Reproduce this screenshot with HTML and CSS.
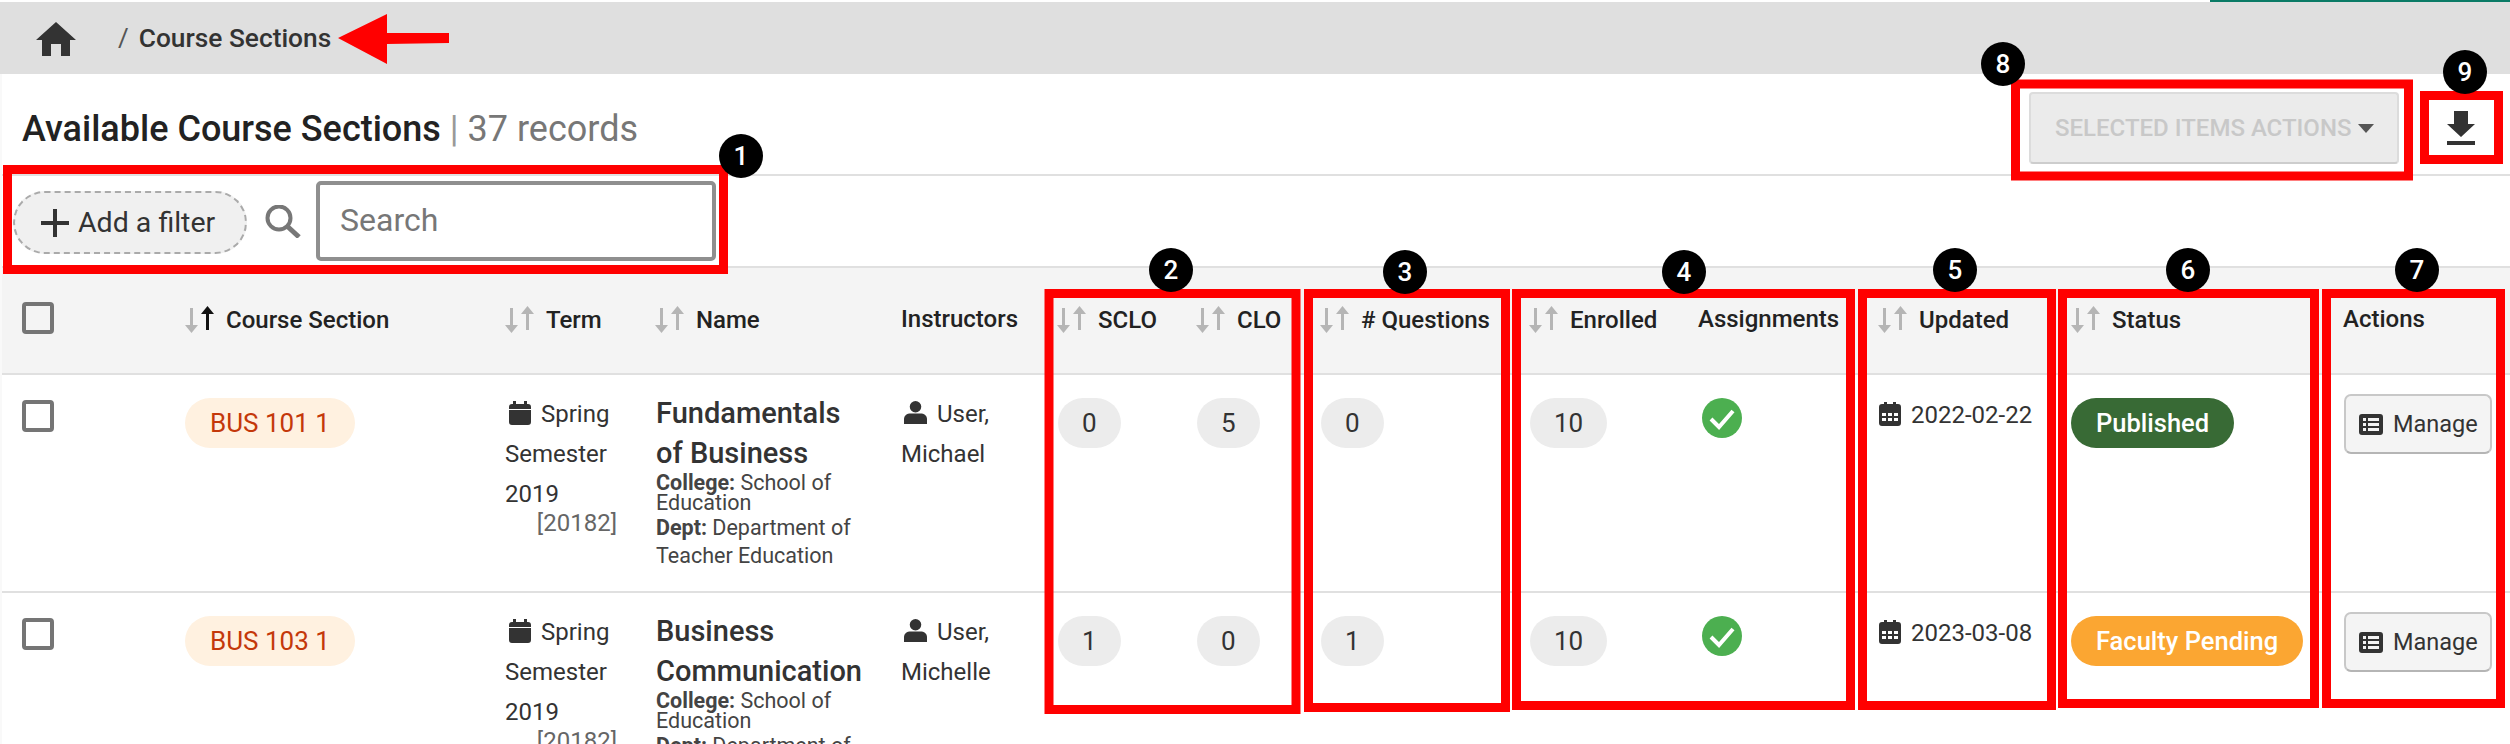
FILE: index.html
```html
<!DOCTYPE html>
<html lang="en">
<head>
<meta charset="utf-8">
<title>Course Sections</title>
<link rel="stylesheet" href="styles.css">
</head>
<body>
<svg class="defs" width="0" height="0" aria-hidden="true">
  <symbol id="sort" viewBox="0 0 32 28">
    <path class="sort-down" d="M6 2h3v17h5L7.500 27 1 19h5z"/>
    <path class="sort-up" d="M22 24V8h-5L23.500 0 30 8h-5v16z"/>
  </symbol>
  <symbol id="date" viewBox="0 0 22 24">
    <path fill-rule="evenodd" d="M3 2h2V0h3v2h6V0h3v2h2a3 3 0 0 1 3 3v16a3 3 0 0 1-3 3H3a3 3 0 0 1-3-3V5a3 3 0 0 1 3-3zM3 11v3h4v-3zm6 0v3h4v-3zm6 0v3h4v-3zM3 16v3h4v-3zm6 0v3h4v-3zm6 0v3h4v-3z"/>
  </symbol>
  <symbol id="term" viewBox="0 0 22 24">
    <path d="M4 0h3v3h8V0h3v3h1a3 3 0 0 1 3 3v2H0V6a3 3 0 0 1 3-3h1zM0 9h22v12a3 3 0 0 1-3 3H3a3 3 0 0 1-3-3z"/>
  </symbol>
  <symbol id="person" viewBox="0 0 24 24">
    <circle cx="12" cy="6" r="6"/><path d="M0 24v-5c0-4 3-6 7-6h10c4 0 7 2 7 6v5z"/>
  </symbol>
  <symbol id="ok" viewBox="0 0 40 40">
    <circle cx="20" cy="20" r="20" fill="#4caf50"/><path d="M9 21l8 8 14-16" fill="none" stroke="#fff" stroke-width="4"/>
  </symbol>
  <symbol id="list" viewBox="0 0 24 21">
    <path fill-rule="evenodd" d="M3 0h18a3 3 0 0 1 3 3v15a3 3 0 0 1-3 3H3a3 3 0 0 1-3-3V3a3 3 0 0 1 3-3zM4 4v3h3V4zm5 0v3h11V4zM4 9v3h3V9zm5 0v3h11V9zM4 14v3h3v-3zm5 0v3h11v-3z"/>
  </symbol>
</svg>

<div class="strip"><span class="strip-accent"></span></div>
<nav class="crumbs">
  <svg class="home" viewBox="0 0 40 34"><path d="M20 0l20 18h-6v16H25V22H15v12H6V18H0z"/></svg>
  <span class="sep">/</span>
  <span class="crumb">Course Sections</span>
</nav>

<main class="content">
  <header class="title-row">
    <h1 class="title">Available Course Sections <span class="count"><span class="bar">|</span> 37 records</span></h1>
    <div class="title-actions">
      <button class="bulk" disabled>SELECTED ITEMS ACTIONS<i class="caret"></i></button>
      <svg class="download" viewBox="0 0 28 34"><path d="M7 0h14v13h7L14 26 0 13h7zM0 30h28v4H0z"/></svg>
    </div>
  </header>

  <div class="filter-row">
    <button class="add-filter"><svg class="plus" viewBox="0 0 28 28"><path d="M12 0h4v12h12v4H16v12h-4V16H0v-4h12z"/></svg>Add a filter</button>
    <svg class="search-icon" viewBox="0 0 36 33"><circle cx="14" cy="13" r="11.500" fill="none" stroke="#777" stroke-width="4"/><path d="M22 21l12 11" stroke="#777" stroke-width="5"/></svg>
    <div class="search">Search</div>
  </div>

  <table class="grid">
    <colgroup>
      <col class="c-check"><col class="c-section"><col class="c-term"><col class="c-name"><col class="c-inst"><col class="c-sclo"><col class="c-clo"><col class="c-q"><col class="c-enr"><col class="c-asg"><col class="c-upd"><col class="c-status"><col class="c-act">
    </colgroup>
    <thead>
      <tr>
        <th><span class="box"></span></th>
        <th class="active"><svg class="sort"><use href="#sort"/></svg>Course Section</th>
        <th><svg class="sort"><use href="#sort"/></svg>Term</th>
        <th><svg class="sort"><use href="#sort"/></svg>Name</th>
        <th>Instructors</th>
        <th><svg class="sort"><use href="#sort"/></svg>SCLO</th>
        <th><svg class="sort"><use href="#sort"/></svg>CLO</th>
        <th><svg class="sort"><use href="#sort"/></svg># Questions</th>
        <th><svg class="sort"><use href="#sort"/></svg>Enrolled</th>
        <th>Assignments</th>
        <th><svg class="sort"><use href="#sort"/></svg>Updated</th>
        <th><svg class="sort"><use href="#sort"/></svg>Status</th>
        <th>Actions</th>
      </tr>
    </thead>
    <tbody>
      <tr>
        <td><span class="box"></span></td>
        <td><span class="pill section">BUS 101 1</span></td>
        <td><svg class="ico term-ico"><use href="#term"/></svg>Spring Semester 2019<div class="code">[20182]</div></td>
        <td>
          <div class="course">Fundamentals of Business</div>
          <div class="college"><b>College:</b> School of Education</div>
          <div class="dept"><b>Dept:</b> Department of Teacher Education</div>
        </td>
        <td><svg class="ico person-ico"><use href="#person"/></svg>User, Michael</td>
        <td><span class="num">0</span></td>
        <td><span class="num">5</span></td>
        <td><span class="num">0</span></td>
        <td><span class="num">10</span></td>
        <td><svg class="ok"><use href="#ok"/></svg></td>
        <td class="nowrap"><svg class="ico date-ico"><use href="#date"/></svg>2022-02-22</td>
        <td><span class="pill published">Published</span></td>
        <td><button class="manage"><svg class="list"><use href="#list"/></svg>Manage</button></td>
      </tr>
      <tr>
        <td><span class="box"></span></td>
        <td><span class="pill section">BUS 103 1</span></td>
        <td><svg class="ico term-ico"><use href="#term"/></svg>Spring Semester 2019<div class="code">[20182]</div></td>
        <td>
          <div class="course">Business Communication</div>
          <div class="college"><b>College:</b> School of Education</div>
          <div class="dept"><b>Dept:</b> Department of Teacher Education</div>
        </td>
        <td><svg class="ico person-ico"><use href="#person"/></svg>User, Michelle</td>
        <td><span class="num">1</span></td>
        <td><span class="num">0</span></td>
        <td><span class="num">1</span></td>
        <td><span class="num">10</span></td>
        <td><svg class="ok"><use href="#ok"/></svg></td>
        <td class="nowrap"><svg class="ico date-ico"><use href="#date"/></svg>2023-03-08</td>
        <td><span class="pill pending">Faculty Pending</span></td>
        <td><button class="manage"><svg class="list"><use href="#list"/></svg>Manage</button></td>
      </tr>
    </tbody>
  </table>
</main>

<svg class="notes" viewBox="0 0 2510 744">
  <path class="arrow" d="M338 38L387 14V33L449 33V43L387 44V64z"/>
  <g class="frames">
    <rect x="7.500" y="169.500" width="716" height="100"/>
    <rect x="1049" y="293.500" width="247" height="416"/>
    <rect x="1308.500" y="293.500" width="197" height="414"/>
    <rect x="1516.500" y="293.500" width="334" height="412"/>
    <rect x="1862.500" y="293.500" width="189" height="412"/>
    <rect x="2062.500" y="293.500" width="252" height="410"/>
    <rect x="2326.500" y="293.500" width="174" height="410"/>
    <rect x="2015.500" y="84" width="393" height="92"/>
    <rect x="2424.500" y="95.500" width="74" height="64"/>
  </g>
  <g class="marks">
    <circle cx="741" cy="156" r="22"/><text x="741" y="165">1</text>
    <circle cx="1171" cy="270" r="22"/><text x="1171" y="279">2</text>
    <circle cx="1405" cy="272" r="22"/><text x="1405" y="281">3</text>
    <circle cx="1684" cy="272" r="22"/><text x="1684" y="281">4</text>
    <circle cx="1955" cy="270" r="22"/><text x="1955" y="279">5</text>
    <circle cx="2188" cy="270" r="22"/><text x="2188" y="279">6</text>
    <circle cx="2417" cy="270" r="22"/><text x="2417" y="279">7</text>
    <circle cx="2003" cy="64" r="22"/><text x="2003" y="73">8</text>
    <circle cx="2465" cy="72" r="22"/><text x="2465" y="81">9</text>
  </g>
</svg>
</body>
</html>
```
FILE: styles.css
```css
* { box-sizing: border-box; }
html, body { margin: 0; height: 744px; overflow: hidden; background: #fff; }
body { position: relative; font-family: Roboto, "Liberation Sans", sans-serif; font-size: 24px; color: #333; }
.defs { position: absolute; }

.strip { height: 2px; display: flex; justify-content: flex-end; }
.strip-accent { width: 300px; background: #0a7b66; }

.crumbs { height: 72px; background: #dfdfdf; display: flex; align-items: center; padding-left: 36px; }
.home { width: 40px; height: 34px; fill: #333; margin-top: 2px; }
.sep { margin-left: 42px; font-size: 26px; color: #555; }
.crumb { margin-left: 10px; font-weight: 500; font-size: 26.300px; }

.content { border-left: 2px solid #f9f9f9; }

.title-row { height: 102px; display: flex; justify-content: space-between; align-items: center; padding: 8px 35px 0 20px; border-bottom: 2px solid #e0e0e0; }
.title { margin: 2px 0 0; font-size: 36px; font-weight: 500; color: #222; }
.count { font-weight: 400; color: #777; }
.bar { color: #999; }
.title-actions { display: flex; align-items: center; gap: 48px; }
.bulk { width: 370px; height: 72px; padding: 0 0 0 24px; text-align: left; font: 500 24px Roboto, sans-serif; color: #c8c8c8; background: #ebebeb; border: 2px solid #dcdcdc; border-bottom-color: #cdcdcd; border-radius: 4px; display: flex; align-items: center; }
.caret { display: inline-block; width: 0; height: 0; margin-left: 7px; border: solid transparent; border-width: 9px 8px 0; border-top-color: #555; }
.download { width: 28px; height: 34px; fill: #333; }

.filter-row { height: 92px; display: flex; align-items: center; padding-left: 11px; border-bottom: 2px solid #e0e0e0; }
.add-filter { width: 234px; height: 63px; padding: 0 0 0 26px; display: flex; align-items: center; gap: 9px; margin-top: 3px; font: 400 28.500px Roboto, sans-serif; color: #333; background: #f0f0f0; border: 2px dashed #aaa; border-radius: 32px; }
.plus { width: 28px; height: 28px; fill: #333; flex: none; }
.search-icon { width: 36px; height: 33px; margin-left: 18px; }
.search { width: 400px; height: 80px; margin-left: 15px; padding-left: 20px; line-height: 70px; font-size: 32px; color: #777; border: 4px solid #8f8f8f; border-radius: 5px; }

.grid { width: 2508px; table-layout: fixed; border-collapse: collapse; }
.c-check { width: 183px; } .c-section { width: 320px; } .c-term { width: 150px; } .c-name { width: 246px; }
.c-inst { width: 156px; } .c-sclo { width: 139px; } .c-clo { width: 124px; } .c-q { width: 209px; }
.c-enr { width: 169px; } .c-asg { width: 180px; } .c-upd { width: 193px; } .c-status { width: 273px; } .c-act { width: 166px; }

th { height: 106px; padding: 38px 0 0; background: #f4f4f4; text-align: left; vertical-align: top; font-size: 24px; font-weight: 500; line-height: 27px; color: #222; white-space: nowrap; border-bottom: 2px solid #e0e0e0; }
th:first-child, td:first-child { padding-left: 20px; }
th:first-child { padding-top: 34px; }
th:last-child { text-indent: -1px; }
td { height: 218px; padding: 19px 0 0; vertical-align: top; line-height: 40px; border-bottom: 2px solid #e0e0e0; }
td:nth-child(3) { padding-right: 38px; }
td:nth-child(4) { padding: 19px 40px 0 1px; }
td:nth-child(5) { padding-right: 20px; }

.sort { width: 32px; height: 28px; margin: 0 10px -6px -1px; }
.sort-down { fill: #b5b5b5; }
.sort-up { fill: var(--sort-up, #b5b5b5); }
.active { --sort-up: #111; }

.box { display: block; width: 32px; height: 32px; border: 4px solid #757575; border-radius: 4px; background: #fff; }
td .box { margin-top: 6px; }
th .box { background: none; }

.pill { display: inline-block; height: 50px; line-height: 50px; margin-top: 4px; padding: 0 25px; border-radius: 25px; font-size: 26px; }
.section { color: #c4380a; background: #fff1e0; }
.published { color: #fff; background: #386a35; font-weight: 500; font-size: 25.500px; }
.pending { color: #fff; background: #fba632; font-weight: 500; font-size: 25.500px; }
.num { display: inline-block; min-width: 62px; height: 50px; margin: 4px 0 0 1px; padding: 0 24px; line-height: 50px; text-align: center; border-radius: 25px; background: #ececec; font-size: 26px; }

.ico { fill: #333; }
.term-ico { width: 22px; height: 24px; margin: 0 10px -3px 4px; }
.person-ico { width: 23px; height: 23px; margin: 0 10px -2px 3px; }
.date-ico { width: 22px; height: 24px; margin: 0 10px -3px 1px; }
.nowrap { white-space: nowrap; padding-top: 20px; }
.code { margin-top: -8px; line-height: 34px; text-align: right; color: #666; }

.course { margin-top: -1px; font-size: 29px; font-weight: 500; }
.college { font-size: 21.500px; line-height: 20px; color: #444; }
.dept { font-size: 21.500px; line-height: 28px; margin-top: 1px; color: #444; }
.college b, .dept b { font-weight: 700; }

.ok { width: 40px; height: 40px; margin: 4px 0 0 4px; display: block; }
.manage { height: 60px; width: 148px; padding: 0 0 0 13px; display: flex; align-items: center; gap: 10px; font: 400 23.500px Roboto, sans-serif; color: #333; background: #f4f4f4; border: 2px solid #c8c8c8; border-bottom-color: #b5b5b5; border-radius: 7px; }
.list { width: 24px; height: 21px; fill: #333; flex: none; }

.notes { position: absolute; left: 0; top: 0; width: 2510px; height: 744px; }
.arrow { fill: #f00; }
.frames rect { fill: none; stroke: #f00; stroke-width: 9; }
.marks circle { fill: #000; }
.marks text { fill: #fff; font-size: 26px; font-weight: 500; text-anchor: middle; }
```
